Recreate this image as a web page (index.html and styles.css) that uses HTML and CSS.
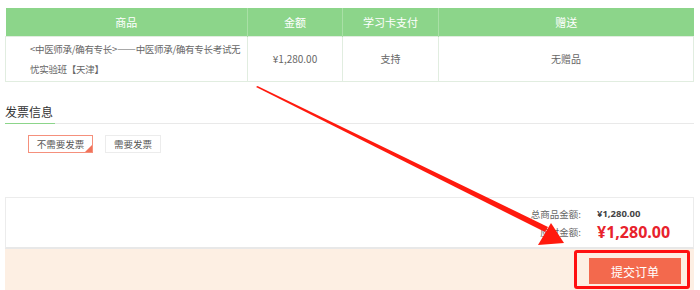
FILE: index.html
```html
<!DOCTYPE html>
<html lang="zh-CN">
<head>
  <meta charset="UTF-8">
  <title>确认订单</title>
  <link rel="stylesheet" href="styles.css">
</head>
<body>
  <div class="page">
    <table class="goods">
      <thead>
        <tr>
          <th class="col-name">商品</th>
          <th class="col-price">金额</th>
          <th class="col-card">学习卡支付</th>
          <th class="col-gift">赠送</th>
        </tr>
      </thead>
      <tbody>
        <tr>
          <td class="name">&lt;中医师承/确有专长&gt;——中医师承/确有专长考试无<br>忧实验班【天津】</td>
          <td>¥1,280.00</td>
          <td>支持</td>
          <td>无赠品</td>
        </tr>
      </tbody>
    </table>

    <div class="section-title"><span>发票信息</span></div>
    <div class="invoice-opts">
      <span class="opt active">不需要发票</span>
      <span class="opt">需要发票</span>
    </div>

    <div class="summary">
      <div class="sum-row">
        <span class="sum-label">总商品金额:</span>
        <span class="sum-value">¥1,280.00</span>
      </div>
      <div class="sum-row">
        <span class="sum-label">应付金额:</span>
        <span class="sum-value big">¥1,280.00</span>
      </div>
    </div>

    <div class="submit-bar">
      <div class="mark-frame">
        <button class="submit-btn">提交订单</button>
      </div>
    </div>
  </div>

  <svg class="arrow" width="700" height="290" viewBox="0 0 700 290">
    <polygon points="256,87 257.5,86 548,227 545,232" fill="#ff1a0e"/>
    <polygon points="564,243 538,245 551,223" fill="#ff1a0e"/>
  </svg>
</body>
</html>
```

FILE: styles.css
```css
* {
  box-sizing: border-box;
  margin: 0;
  padding: 0;
}

body {
  font-family: "Noto Sans CJK SC", "Liberation Sans", sans-serif;
  color: #666;
  background: #fff;
  position: relative;
}

.page {
  width: 700px;
  padding: 8px 6px 0 5px;
}

.goods {
  width: 689px;
  border-collapse: collapse;
  table-layout: fixed;
  font-size: 11px;
}

.goods th {
  background-color: #8cd58a;
  color: #fff;
  font-weight: normal;
  height: 28px;
  font-size: 11px;
  border-left: 1px solid #a9e0a6;
}

.goods th:first-child {
  border-left: none;
}

.col-name { width: 242px; }
.col-price { width: 95px; }
.col-card { width: 96px; }

.goods td {
  height: 45px;
  text-align: center;
  border: 1px solid #e1ede0;
  color: #666;
  font-size: 10px;
}

.goods td.name {
  text-align: left;
  padding: 0 0 0 24px;
  line-height: 20px;
  font-size: 9.5px;
  letter-spacing: -0.3px;
  white-space: nowrap;
}

.section-title {
  display: flex;
  margin-top: 21px;
  border-bottom: 1px solid #e9e9e9;
}

.section-title span {
  font-size: 12px;
  color: #333;
  line-height: 18px;
  padding-bottom: 2px;
  border-bottom: 1px solid #8cd58a;
  margin-bottom: -1px;
  padding-right: 2px;
}

.invoice-opts {
  display: flex;
  gap: 12px;
  padding: 11px 0 0 23px;
}

.opt {
  position: relative;
  display: inline-flex;
  align-items: center;
  justify-content: center;
  height: 18px;
  width: 56px;
  border: 1px solid #ececec;
  font-size: 9.5px;
  color: #555;
}

.opt.active {
  width: 65px;
  border-color: #f5907c;
}

.opt.active::after {
  content: "";
  position: absolute;
  right: 0;
  bottom: 0;
  border-left: 7px solid transparent;
  border-bottom: 7px solid #f0735a;
}

.summary {
  margin-top: 44px;
  height: 52px;
  border: 1px solid #ececec;
  border-bottom: 2px solid #e8e8e8;
  display: flex;
  flex-direction: column;
  align-items: flex-end;
  padding: 7px 24px 0 0;
}

.sum-row {
  display: flex;
  align-items: center;
  height: 18px;
}

.sum-label {
  width: 80px;
  text-align: right;
  font-size: 9.5px;
  color: #666;
  margin-right: 16px;
}

.sum-value {
  width: 72px;
  font-family: "Open Sans", "Liberation Sans", sans-serif;
  font-size: 9.5px;
  font-weight: bold;
  color: #444;
}

.sum-value.big {
  font-size: 16px;
  color: #e8222c;
}

.submit-bar {
  background: #fdefe3;
  height: 41px;
  display: flex;
  justify-content: flex-end;
  align-items: flex-start;
  padding: 1px 4px 0 0;
}

.mark-frame {
  border: 3px solid #ff1010;
  border-radius: 3px;
  padding: 5px 6px 2px 12px;
}

.submit-btn {
  width: 92px;
  height: 26px;
  border: none;
  background-color: #f3694d;
  color: #fff;
  font-family: "Noto Sans CJK SC", sans-serif;
  font-size: 12px;
}

.arrow {
  position: absolute;
  left: 0;
  top: 0;
  pointer-events: none;
}
```
